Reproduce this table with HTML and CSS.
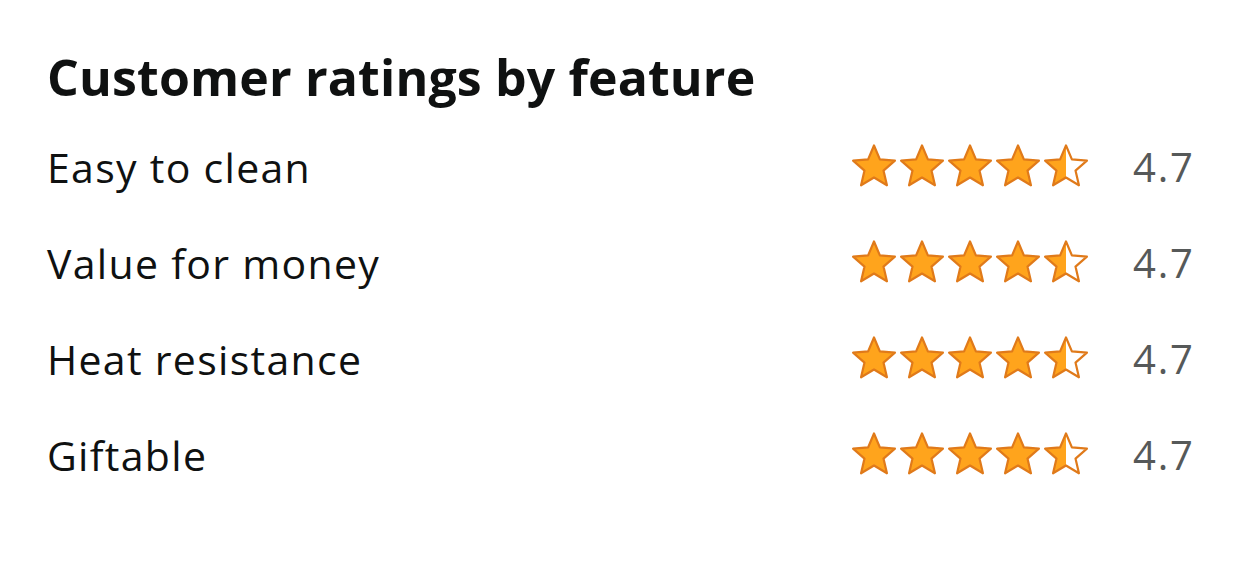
FILE: index.html
```html
<!DOCTYPE html>
<html>
<head>
<meta charset="utf-8">
<link rel="stylesheet" href="styles.css">
</head>
<body>
<svg width="0" height="0" class="defs">
  <defs>
    <linearGradient id="half" x1="0" x2="1" y1="0" y2="0">
      <stop offset="0.5" stop-color="#ffa41c"/>
      <stop offset="0.5" stop-color="#ffffff"/>
    </linearGradient>
    <symbol id="star" viewBox="0 0 46 43">
      <path d="M23 1.5 L28.88 15.41 L43.92 16.7 L32.51 26.59 L35.93 41.3 L23 33.5 L10.07 41.3 L13.49 26.59 L2.08 16.7 L17.12 15.41 Z"/>
    </symbol>
  </defs>
</svg>
<section class="card">
  <h2 class="title">Customer ratings by feature</h2>
  <div class="row">
    <span class="label">Easy to clean</span>
    <span class="stars">
      <svg class="star full"><use href="#star"/></svg><svg class="star full"><use href="#star"/></svg><svg class="star full"><use href="#star"/></svg><svg class="star full"><use href="#star"/></svg><svg class="star half"><use href="#star"/></svg>
    </span>
    <span class="score">4.7</span>
  </div>
  <div class="row">
    <span class="label">Value for money</span>
    <span class="stars">
      <svg class="star full"><use href="#star"/></svg><svg class="star full"><use href="#star"/></svg><svg class="star full"><use href="#star"/></svg><svg class="star full"><use href="#star"/></svg><svg class="star half"><use href="#star"/></svg>
    </span>
    <span class="score">4.7</span>
  </div>
  <div class="row">
    <span class="label">Heat resistance</span>
    <span class="stars">
      <svg class="star full"><use href="#star"/></svg><svg class="star full"><use href="#star"/></svg><svg class="star full"><use href="#star"/></svg><svg class="star full"><use href="#star"/></svg><svg class="star half"><use href="#star"/></svg>
    </span>
    <span class="score">4.7</span>
  </div>
  <div class="row">
    <span class="label">Giftable</span>
    <span class="stars">
      <svg class="star full"><use href="#star"/></svg><svg class="star full"><use href="#star"/></svg><svg class="star full"><use href="#star"/></svg><svg class="star full"><use href="#star"/></svg><svg class="star half"><use href="#star"/></svg>
    </span>
    <span class="score">4.7</span>
  </div>
</section>
</body>
</html>
```
FILE: styles.css
```css
html, body {
  margin: 0;
  padding: 0;
  background: #ffffff;
}
.defs {
  position: absolute;
  width: 0;
  height: 0;
}
.card {
  padding: 45px 47px 0 47px;
  font-family: "Open Sans", "Noto Sans", sans-serif;
  color: #0f1111;
}
.title {
  margin: 0 0 10px 0;
  font-size: 50px;
  font-weight: 700;
  line-height: 64px;
  letter-spacing: 0.15px;
}
.row {
  display: flex;
  align-items: center;
  height: 96px;
}
.label {
  flex: 1;
  font-size: 41px;
  line-height: 48px;
  letter-spacing: 1.3px;
}
.stars {
  display: flex;
  gap: 2px;
  margin-right: 44px;
  margin-bottom: 4px;
}
.star {
  width: 46px;
  height: 43px;
  stroke: #e07a1a;
  stroke-width: 2.2;
  stroke-linejoin: round;
}
.star.full {
  fill: #ffa41c;
}
.star.half {
  fill: url(#half);
}
.score {
  width: 62px;
  font-size: 40px;
  line-height: 48px;
  letter-spacing: 1.8px;
  color: #565959;
  white-space: nowrap;
}
```
